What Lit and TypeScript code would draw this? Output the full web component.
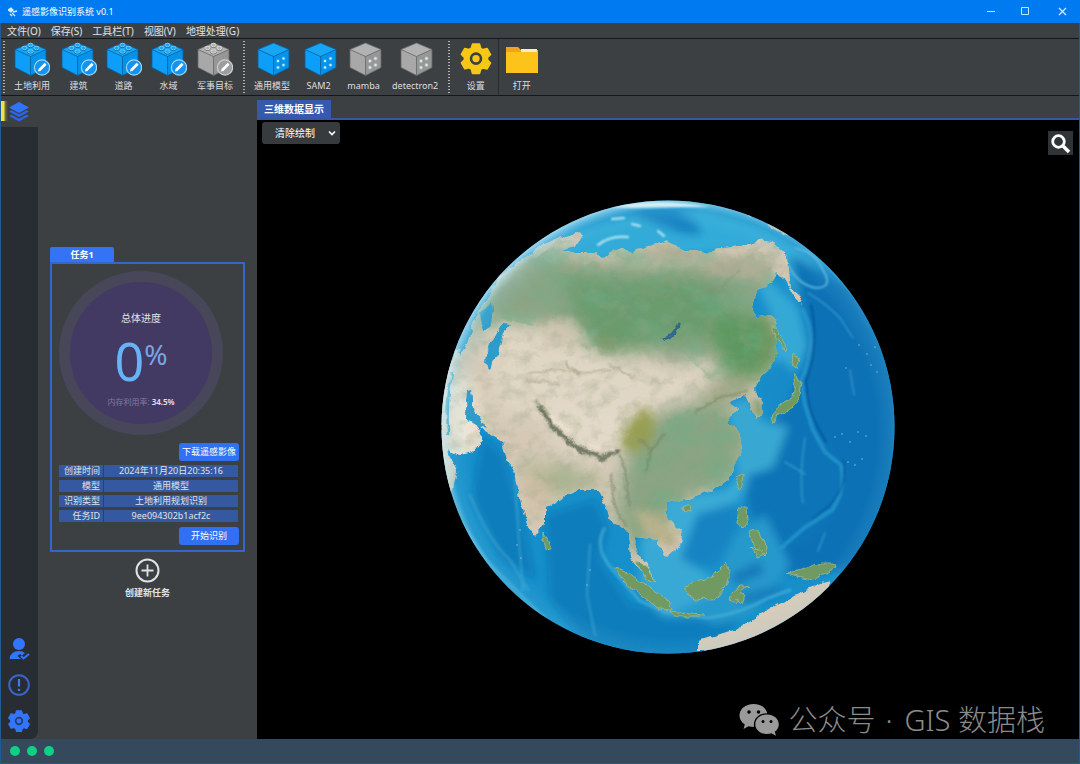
import { LitElement, html, css, svg } from "lit";
import { customElement, property } from "lit/decorators.js";

const gearPath =
  "M9.300 1.800h5.400l.9 3.200 1.700 1 3.300-.8 2.600 4.600-2.300 2.300v1.900l2.300 2.300-2.600 4.600-3.300-.8-1.700 1-.9 3.200H9.300L8.400 21l-1.700-1-3.300.8-2.600-4.600 2.300-2.300V12L.8 9.700l2.600-4.600 3.300.8 1.700-1z";

const cube = (kind: string, on: boolean) => {
  const top = on ? "#16a6f4" : "#b2b2b2";
  const left = on ? "#0c9ef8" : "#a8a8a8";
  const right = on ? "#0792ea" : "#979797";
  const edge = on ? "#0a5e9c" : "#666";
  const stud = on ? "#6fcdfb" : "#dcdcdc";
  const brick = kind === "brick";
  const dx = brick ? 0 : 3;
  return html`<svg width="36" height="36" viewBox="0 0 36 36" aria-hidden="true">
    <g transform="translate(${dx} 0)">
      <path d="M16.500 2 32 8.500v18L16.500 34.500 1 26.500v-18z" fill=${left} />
      <path d="M16.500 2 32 8.500 16.500 15.500 1 8.500z" fill=${top} />
      <path d="M16.500 15.500 32 8.500v18L16.500 34.500z" fill=${right} />
      <path
        d="M1 8.500 16.500 15.500 32 8.500M16.500 15.500v19M16.500 2 32 8.500v18L16.500 34.500 1 26.500v-18z"
        fill="none" stroke=${edge} stroke-width="0.8" stroke-linejoin="round" />
      ${brick
        ? svg`${[[16.5, 4], [10.5, 7], [22.5, 7], [16.5, 10.5]].map(
            ([x, y]) => svg`<ellipse cx=${x} cy=${y + 0.8} rx="3" ry="2" fill=${edge} />
            <ellipse cx=${x} cy=${y} rx="2.600" ry="1.700" fill=${top} stroke=${stud} stroke-width="1" />`
          )}`
        : svg`${[[21, 20], [26.5, 17.5], [21, 26.5], [26.5, 24]].map(
            ([x, y]) => svg`<circle cx=${x} cy=${y} r="2" fill=${top} /><circle cx=${x} cy=${y} r="1.200" fill="#d6e9f4" />`
          )}`}
    </g>
    ${brick
      ? svg`<circle cx="28" cy="26.500" r="7.600" fill=${on ? "#1693f0" : "#9d9d9d"} stroke=${on ? "#9ad6f8" : "#cfcfcf"} stroke-width="1.200" />
        <path d="M24 30.500l.5-2.500 6.200-6.200 1.900 1.900-6.200 6.200z" fill="#fff" />`
      : null}
  </svg>`;
};

@customElement("tool-button")
class ToolButton extends LitElement {
  @property() label = "";
  @property() icon = "brick";
  @property({ type: Boolean }) on = false;

  static styles = css`
    :host { display: block; }
    .tool {
      display: flex; flex-direction: column; align-items: center;
      min-width: 45px; height: 56px; padding: 2px 0 0; border: 0;
      background: none; color: #dcdfe1;
      font: 9px/14px "Noto Sans", "Noto Sans CJK SC", sans-serif;
      white-space: nowrap;
    }
    .tool svg { display: block; margin-bottom: 2px; }
    .tool span { padding: 0 6px; }
  `;

  render() {
    const picture =
      this.icon === "gear"
        ? html`<svg width="36" height="36" viewBox="0 0 36 36" aria-hidden="true">
            <g transform="translate(2.400 .8) scale(1.300)"><path d=${gearPath} fill="#f5c816" stroke="#f5c816" stroke-width="1.200" stroke-linejoin="round" /></g>
            <circle cx="18" cy="17.600" r="5" fill="#f5c816" stroke="#3c4043" stroke-width="2.600" />
          </svg>`
        : this.icon === "folder"
          ? html`<svg width="36" height="36" viewBox="0 0 36 36" aria-hidden="true">
              <path d="M2 6h12l3 3h17v23H2z" fill="#f0a41c" />
              <path d="M17 8h16v3H17z" fill="#f7ecc8" />
              <path d="M2 11h32v21H2z" fill="#fcc41b" />
            </svg>`
          : cube(this.icon, this.on);
    return html`<button class="tool" type="button">${picture}<span>${this.label}</span></button>`;
  }
}

@customElement("earth-globe")
class EarthGlobe extends LitElement {
  static styles = css`
    :host { display: block; }
    svg { display: block; }
  `;

  render() {
    return html`<svg width="454" height="454" viewBox="441 200 454 454" role="img" aria-label="地球">
      <defs>
        <clipPath id="disc"><circle cx="668" cy="427" r="226.500" /></clipPath>
        <filter id="b1" x="-20%" y="-20%" width="140%" height="140%"><feGaussianBlur stdDeviation="1.200" /></filter>
        <filter id="b4" x="-40%" y="-40%" width="180%" height="180%"><feGaussianBlur stdDeviation="4" /></filter>
        <filter id="b10" x="-60%" y="-60%" width="220%" height="220%"><feGaussianBlur stdDeviation="9" /></filter>
        <filter id="rough" x="-5%" y="-5%" width="110%" height="110%">
          <feTurbulence type="fractalNoise" baseFrequency="0.120" numOctaves="3" seed="4" result="n" />
          <feDisplacementMap in="SourceGraphic" in2="n" scale="6" xChannelSelector="R" yChannelSelector="G" />
        </filter>
        <filter id="grain" x="0" y="0" width="100%" height="100%">
          <feTurbulence type="fractalNoise" baseFrequency="0.060 0.080" numOctaves="5" seed="9" />
          <feColorMatrix values="0 0 0 0 .30  0 0 0 0 .36  0 0 0 0 .22  2.200 0 0 0 -1" />
        </filter>
        <filter id="green" x="0" y="0" width="100%" height="100%">
          <feTurbulence type="fractalNoise" baseFrequency="0.030 0.045" numOctaves="5" seed="21" result="n" />
          <feColorMatrix in="n" values="0 0 0 0 .16  0 0 0 0 .42  0 0 0 0 .24  0 3.500 0 0 -1.500" result="c" />
          <feComposite in="c" in2="SourceGraphic" operator="in" />
        </filter>
        <radialGradient id="rim" gradientUnits="userSpaceOnUse" cx="674" cy="433" r="235">
          <stop offset="0.860" stop-color="#6fd0ee" stop-opacity="0" />
          <stop offset="0.950" stop-color="#7fd5f0" stop-opacity="0.150" />
          <stop offset="1" stop-color="#d8f3fa" stop-opacity="0.750" />
        </radialGradient>
        <clipPath id="land">
          <path d="M441 200V380L500 275 520 261 543 245 562 237 580 232 582 235 575 247 563 250 570 253 597 253 603 258 610 252 623 248 633 255 637 249 650 246 663 242 667 240 677 245 680 250 697 250 707 255 715 248 740 245 750 245 757 240 773 242 787 255 788 270 790 287 799 295 803 306 793 296 785 280 777 272 773 282 757 290 753 307 757 317 772 315 777 323 777 353 770 368 760 377 755 390 762 403 763 413 757 420 752 410 745 395 737 398 728 403 738 408 728 420 730 425 738 430 742 447 738 460 728 480 713 490 697 495 690 500 680 500 667 503 667 517 680 530 683 543 667 557 660 548 657 540 637 537 635 553 647 563 653 577 643 573 630 557 628 533 623 527 610 522 607 507 598 490 580 490 567 495 545 508 545 523 535 536 530 530 522 507 517 487 513 470 507 460 502 442 483 430 472 421 468 390 466 400 468 420 475 420 482 440 473 452 460 455 448 450 449 456 457 470 453 490 441 500V200z" />
        </clipPath>
      </defs>
      <g clip-path="url(#disc)">
        <rect x="441" y="200" width="454" height="454" fill="#178fca" />
        <g filter="url(#b4)">
          <path d="M480 330C520 220 620 215 700 210 780 225 810 255 850 300L800 300 770 250 600 262 520 265z" fill="#31abd8" />
          <path d="M625 208l50 3 20 10 8 14-20-1-45-17z" fill="#1582c2" />
          <path d="M790 255l25 12 35 20 48 80V520L850 570 785 575 760 480 780 440 802 400 808 330z" fill="#0f72b5" />
          <path d="M805 365q0 50 22 75l15 30-5 40-24 28-45 20-20-50-5-50 35-40z" fill="#1075b7" />
          <path d="M483 435l20 20 18 60 15 65-35-20-30-60zM545 515l50-15 13 30-8 30 30 45 60 10 50 0-30 50-110-5-50-60z" fill="#087dbb" />
          <path d="M690 505l45-10 2 35-20 32-32 10-5-22z" fill="#1484c2" />
          <path d="M755 283l18 0 25 25 10 40-15 25-20-10-2-50z" fill="#36a9d6" />
          <path d="M728 405l20-8 15 25 25 5-15 40-35 12-8-50z" fill="#38a8d2" />
          <path d="M665 498l60-8 18-18 6 10-12 20-40 12-15 40-12 20-22-5-8-30 20-10z" fill="#3aabd6" />
          <path d="M760 380l20-22 15 15-5 30-20 18z" fill="#188bc8" />
          <path d="M640 545l35 10 35 20 20 25-20 15-50 0-20-30z" fill="#38a9d5" />
          <path d="M735 535l30-20 25 50-40 50-70 20-20-15 50-25z" fill="#2599cc" />
          <path d="M730 575l30-14 4 12-28 12zM740 595l40-10 2 8-38 12z" fill="#1279ba" />
          <path d="M640 618l60 0 20 8-30 25-50-3z" fill="#0f7dbd" />
        </g>
        <g fill="none" filter="url(#b1)" stroke-linecap="round" stroke-linejoin="round">
          <path d="M788 265q10 20 28 23 18 0 7-18-8-18-28-22" stroke="#56b4df" stroke-width="2" />
          <path d="M808 293q20 12 32 25l13 20" stroke="#3f9fd2" stroke-width="1.200" />
          <path d="M803 310q10 20 7 40-3 20-9 30l4 25 8 25 12 22 16 13q5 25-9 45l-28 18-23 20" stroke="#2a9bd0" stroke-width="4" opacity="0.700" />
          <path d="M811 305q9 38-5 76 1 24 10 43l10 18" stroke="#075a9c" stroke-width="2" />
          <path d="M843 460q5 25-12 44l-18 15" stroke="#075b9e" stroke-width="1.600" />
          <path d="M470 495q18 45 40 65l18 30M590 545l-3 50 8 40M515 480q3 55 8 110" stroke="#4db4dd" stroke-width="3" opacity="0.350" />
          <path d="M604 529q-11 20 10 42l26 30 28 12 40 5q35-5 60-20l22-8M446 500l40 60 60 60" stroke="#47b2db" stroke-width="3.500" opacity="0.600" />
          <path d="M805 438q-6 40-2 65M825 533l-7 18M850 370l4 25M785 462l20 12" stroke="#4cabd8" stroke-width="1.500" opacity="0.600" />
          <path d="M598 245q12-10 30-8M612 219l12-1M632 224l8 2M658 231l6 5" stroke="#c9eef7" stroke-width="2" />
        </g>
        <g fill="#cdeefa" opacity="0.350">
          ${[[835, 437], [842, 434], [850, 442], [858, 432], [866, 436], [848, 462], [855, 465], [862, 459], [859, 345], [867, 354], [875, 347], [871, 365], [877, 372], [846, 368], [520, 530], [517, 545], [521, 558], [590, 570], [587, 585]].map(
            ([x, y]) => svg`<circle cx=${x} cy=${y} r="1" />`
          )}
        </g>
        <g filter="url(#rough)">
          <g clip-path="url(#land)">
            <rect x="441" y="200" width="400" height="400" fill="#d5c9b6" />
            <g filter="url(#b10)">
              <path d="M480 300l50-45 75 8 100 0 60 0 10 30-20 60-30 20-50-10-50-18-40 14-25-5-25-15-70-4z" fill="#8ba685" />
              <path d="M560 275l60 5 60-5 50 15 10 30-30 20-50 0-40 20-35-20z" fill="#6b9c6e" />
              <path d="M710 320l60-8 15 35-25 35-40-10z" fill="#5d985f" />
              <path d="M480 325l60 0 60 25 60 20 50-12 15 25-35 35-70 0-60 5-60-12z" fill="#e0d6c4" />
              <path d="M540 405l50-8 50 15 10 10-15 25-40 15-40-20z" fill="#e3d9c8" />
              <path d="M515 464l50 3 40 12-25 12-40 5z" fill="#a3b18c" />
              <path d="M630 430l40-25 50-5 30 30-10 50-55 20-50 60-20-45z" fill="#8aa583" />
              <path d="M690 395l30-18 30 0 5 15-30 12z" fill="#a3a888" />
              <path d="M441 370l30 10 15 60-45 50z" fill="#f0e6d7" />
              <path d="M520 475l30 0-5 30-10 20z" fill="#d0bea5" />
            </g>
            <path d="M500 280l60-40 220 0 5 60-10 65-20 30-45-15-30-30-50-8-45 6-20-18-65-10zM640 430l60-25 45 25-10 50-55 22-45 15z" filter="url(#green)" opacity="0.450" />
            <g filter="url(#b4)">
              <path d="M635 415l13-8 7 18-6 20-20 8-10-12z" fill="#969c4e" opacity="0.900" />
              <path d="M600 333l18 8-8 10-14-3zM765 320l10 10-3 30-14 12zM752 400l12 4 0 12-8 4z" fill="#719661" />
              <path d="M700 262l30-6 40 6-8 22-30-6-25-4zM640 250l30-6 35 10-8 6-50-2z" fill="#b3ae96" opacity="0.850" />
              <path d="M632 510l25 3 20 20-3 16-25-12z" fill="#b8b28c" />
              <path d="M545 350l-5-28 30-4 20 25z" fill="#d4c8b3" opacity="0.800" />
            </g>
            <g fill="none" stroke-linejoin="round" stroke-linecap="round" filter="url(#b1)">
              <path d="M540 407l8 13 16 18 18 12 20 8 16-7" stroke="#6d735e" stroke-width="4.500" />
              <path d="M545 407l10 13 18 15 18 11 22 5" stroke="#ede2cf" stroke-width="3" />
              <path d="M530 372l30-2 26 3 24-3M565 363l15 12M610 365l24 12M525 380l35 4" stroke="#8b8768" stroke-width="1.200" opacity="0.800" />
              <path d="M620 455l6 20 2 30M640 440l12 10-6 20M612 475l2 30 12 20M535 401l15 13M650 452l15-18M695 412l25-15 25-5" stroke="#6e815e" stroke-width="2" opacity="0.700" />
              <path d="M740 270l-20 18-36 10M613 275l17 22-5 20" stroke="#779275" stroke-width="1.500" opacity="0.600" />
            </g>
            <rect x="441" y="200" width="400" height="400" filter="url(#grain)" opacity="0.420" />
          </g>
          <g fill="#2e9cca">
            <path d="M511 325l-8 9-5 19-8 16-6-5 1-9 11-22 7-9zM480 313l12-11 1 10-3 16-7 4zM460 355l-1-8 10-22 3 5-5 16z" />
            <path d="M467 390l4-1 2 20 6 8 8 12-9-3-12-7z" />
          </g>
          <path d="M452 372q-6 30-4 62" fill="none" stroke="#49a9c8" stroke-width="2.500" />
          <path d="M661 339q13-3 17-17l2 1q-1 11-15 18z" fill="#2f6790" />
          <g fill="#6f9a62" stroke="#a9b78a" stroke-width="0.800">
            <path d="M543 533l6 8 3 8-7 1-2-8z" />
            <path d="M615 568l14 5 20 15 20 13 3 9-13-1-18-14-18-14zM636 562l11 5 8 15-8-3z" />
            <path d="M684 588l14-9 14-2 14-14 4 8-4 16-12 13-20-1z" />
            <path d="M738 475l5-1-1 12-4 3-2-7zM682 508l8-3 1 6-7 2zM739 507l8 0 1 13-5 8-6-5zM748 530l11 1 8 15-2 10-6-3-5-8zM750 547l10 3 5 5-8 3z" />
            <path d="M732 593l8-7 9 0-10 5 6 5-3 7-5-3-2 4-5-4zM670 611l32 3 3 2-31 0z" />
            <path d="M787 573l14-3 20-7 15 0 1 4-23 12-17-3z" />
            <path d="M793 354l7 5-3 8-5-4zM796 373l5 10-3 17-9 11-12 4-3 8-2-7 8-11 13-8zM773 325l8 12 6 12-2 1-12-19z" />
          </g>
          <path d="M698 651l0-10 38-12 40-24 34-16 18-8 3 8-42 44-50 18z" fill="#d8cbb9" />
          <path d="M750 213l30 10 20 16-20-6-17-13-15-4z" fill="#b7bda8" />
        </g>
        <path d="M610 207q50-10 100 0l-28 0-50 1z" fill="#f1f8f7" filter="url(#b1)" />
        <circle cx="668" cy="427" r="227" fill="url(#rim)" />
      </g>
    </svg>`;
  }
}

@customElement("app-root")
class AppRoot extends LitElement {
  static styles = css`
    :host {
      display: block;
      font: 9px/14px "Noto Sans", "Noto Sans CJK SC", sans-serif;
      color: #e0e3e5;
    }
    * { box-sizing: border-box; }
    button, select { font: inherit; color: inherit; }
    svg { display: block; }
    .window {
      display: flex; flex-direction: column; min-height: 100vh;
      background: #3c4043; border: solid #1f5c96; border-width: 0 1px 1px;
    }
    .title {
      display: flex; align-items: center; gap: 4px; height: 23px;
      margin: 0 -1px; padding: 0 0 0 8px; background: #007af0; color: #fff;
    }
    .name { flex: 1; margin: 0; font: inherit; }
    .win { display: grid; place-items: center; width: 30px; height: 23px; padding: 0; border: 0; background: none; }
    .title .win:last-child { width: 36px; }
    .menu { display: flex; height: 16px; padding: 0 6px; gap: 10px; border-bottom: 1px solid #15181a; }
    .menu button { border: 0; padding: 1px 0 0; background: none; font-size: 10px; line-height: 14px; }
    .tools { display: flex; height: 57px; border-bottom: 1px solid #15181a; }
    .group { display: flex; padding: 0 1px 0 3px; }
    .group::before {
      content: ""; width: 2px; margin: 2px 3px 2px 0;
      background: repeating-linear-gradient(#b0b4b6 0 1px, transparent 1px 3px);
    }
    .group:first-child { padding-left: 2px; }
    .divided { border-left: 1px solid #2a2d30; }
    .main { flex: 1; display: flex; background: #3c4043; }
    .rail { display: flex; flex-direction: column; width: 37px; }
    .rail button { display: grid; place-items: center; width: 36px; height: 36px; padding: 0; border: 0; background: none; }
    .rail .layers {
      height: 31px; background: linear-gradient(90deg, #f0e04a 3px, #77733f 4px, transparent 7px) 0 5px / 100% 20px no-repeat;
    }
    .dark { flex: 1; display: flex; flex-direction: column; justify-content: flex-end; background: #282c33; border-radius: 0 0 8px 0; }
    .tasks { display: flex; flex-direction: column; justify-content: center; width: 219px; padding: 12px 12px 0 12px; }
    .task-tab {
      align-self: flex-start; width: 64px; height: 15px; border: 0; padding: 0; border-radius: 2px 2px 0 0;
      background: #3573f5; color: #fff; font-weight: 700; line-height: 15px;
    }
    .card { border: 2px solid #3467c8; padding: 7px 4px 5px 6px; display: flex; flex-direction: column; }
    .dial {
      display: flex; flex-direction: column; align-items: center; width: 164px; height: 164px; margin-left: 1px;
      padding-top: 29px; border: 11px solid #484659; border-radius: 50%; background: #433a64;
    }
    .dial .caption { font-size: 10px; }
    .percent { display: flex; align-items: flex-start; height: 66px; color: #66b3f8; font-size: 52px; line-height: 64px; margin-top: 4px; }
    .percent sup { font-size: 28px; line-height: 50px; color: #79a5e2; }
    .memory { font-size: 8px; color: #85799f; }
    .memory b { color: #e6e3f0; font-weight: 600; }
    .action {
      align-self: flex-end; width: 60px; height: 18px; margin-top: 8px; padding: 0; border: 0; border-radius: 3px;
      background: #3070f2; color: #fff; white-space: nowrap;
    }
    .facts { width: 100%; margin-top: 1px; border-spacing: 1px 3px; }
    .facts th, .facts td { height: 12px; padding: 0; background: #3459a0; font-weight: 400; line-height: 12px; }
    .facts th { width: 44px; padding-right: 3px; text-align: right; }
    .facts td { text-align: center; }
    .action.start { margin-top: 2px; }
    .create {
      display: flex; flex-direction: column; align-items: center; gap: 3px; align-self: center;
      margin-top: 6px; padding: 0; border: 0; background: none; font-weight: 700;
    }
    .view { flex: 1; display: flex; flex-direction: column; min-width: 0; }
    .tabs { display: flex; height: 24px; padding-top: 4px; border-bottom: 2px solid #3556a0; }
    .tabs button { border: 0; padding: 0 7px; background: #3759ad; color: #fff; font-size: 10px; font-weight: 700; }
    .scene { position: relative; flex: 1; display: grid; place-items: center; padding-bottom: 5px; background: #000; }
    .clear { position: absolute; left: 5px; top: 2px; }
    .clear select {
      appearance: none; width: 78px; height: 22px; border: 0; border-radius: 3px; padding: 0 0 0 13px;
      background: #373b3e; color: #fff; font-size: 10px;
    }
    .clear svg { position: absolute; right: 4px; top: 8px; pointer-events: none; }
    .search {
      position: absolute; right: 6px; top: 11px; display: grid; place-items: center;
      width: 25px; height: 24px; padding: 0; border: 0; background: #303436;
    }
    .mark {
      position: absolute; right: 34px; bottom: 0; display: flex; align-items: center; gap: 10px;
      color: #8b8b8b; font: 300 29px/38px "Noto Sans", "Noto Sans CJK SC", sans-serif; white-space: nowrap;
    }
    .mark i { padding: 0 12px 0 10px; font-style: normal; }
    .status { display: flex; align-items: center; gap: 7px; height: 24px; padding: 0 9px; background: #34495c; }
    .dot { width: 10px; height: 10px; border-radius: 50%; background: #10d085; }
  `;

  private first = ["土地利用", "建筑", "道路", "水域", "军事目标"];
  private models = ["通用模型", "SAM2", "mamba", "detectron2"];
  private facts = [
    ["创建时间", "2024年11月20日20:35:16"],
    ["模型", "通用模型"],
    ["识别类型", "土地利用规划识别"],
    ["任务ID", "9ee094302b1acf2c"],
  ];

  render() {
    return html`<div class="window">
      <header class="title">
        <svg width="10" height="10" viewBox="0 0 10 10" aria-hidden="true">
          <path d="M0 3l3-2 2 2-2 2zM5 5l4-1M4 6l3 3M2 7l2 2" fill="#d9ecff" stroke="#d9ecff" stroke-width="1.300" />
        </svg>
        <h1 class="name">遥感影像识别系统 v0.1</h1>
        <button class="win" aria-label="最小化"><svg width="9" height="9" viewBox="0 0 9 9"><path d="M0 4.500h8" stroke="#b9ecff" /></svg></button>
        <button class="win" aria-label="最大化"><svg width="9" height="9" viewBox="0 0 9 9"><path d="M.5 .5h7v7h-7z" fill="none" stroke="#b9ecff" /></svg></button>
        <button class="win" aria-label="关闭"><svg width="9" height="9" viewBox="0 0 9 9"><path d="M1 1l7 7M8 1L1 8" stroke="#c9f2ff" stroke-width="1.200" /></svg></button>
      </header>
      <nav class="menu">
        ${["文件(O)", "保存(S)", "工具栏(T)", "视图(V)", "地理处理(G)"].map((m) => html`<button type="button">${m}</button>`)}
      </nav>
      <div class="tools">
        <div class="group">${this.first.map((t, i) => html`<tool-button label=${t} icon="brick" ?on=${i < 4}></tool-button>`)}</div>
        <div class="group">${this.models.map((t, i) => html`<tool-button label=${t} icon="cube" ?on=${i < 2}></tool-button>`)}</div>
        <div class="group">
          <tool-button label="设置" icon="gear"></tool-button>
          <tool-button class="divided" label="打开" icon="folder"></tool-button>
        </div>
      </div>
      <div class="main">
        <nav class="rail">
          <button class="layers" aria-label="图层">
            <svg width="22" height="22" viewBox="0 0 22 22">
              <path d="M11 1l10 5.500-10 5.500L1 6.500z" fill="#2f74ff" />
              <path d="M1 10.500l2.500-1.300L11 13.300l7.500-4.100 2.500 1.300-10 5.500zM1 15l2.500-1.300 7.500 4.100 7.500-4.100L21 15l-10 5.500z" fill="#2b66e8" />
            </svg>
          </button>
          <div class="dark">
            <button aria-label="用户">
              <svg width="22" height="24" viewBox="0 0 22 24">
                <circle cx="11" cy="7" r="6" fill="#3276ff" />
                <path d="M1.500 22q1-8 9.500-8 4 0 6 2l-3 2.500-2-1.500-2.500 2 3.500 3z" fill="#3276ff" />
                <path d="M13 19l2.500 2.500L21 17" fill="none" stroke="#3276ff" stroke-width="2" />
              </svg>
            </button>
            <button aria-label="提示">
              <svg width="24" height="24" viewBox="0 0 24 24">
                <circle cx="12" cy="12" r="9.800" fill="none" stroke="#3766c6" stroke-width="2" />
                <path d="M12 6v7.500M12 15.800v2.200" stroke="#3f7ae8" stroke-width="2.200" />
              </svg>
            </button>
            <button aria-label="设置">
              <svg width="24" height="24" viewBox="0 0 26 26">
                <g transform="translate(1 .1)"><path d=${gearPath} fill="#3276ff" stroke="#3276ff" stroke-width="1.200" stroke-linejoin="round" /></g>
                <circle cx="13" cy="13" r="3.600" fill="#3276ff" stroke="#263a6b" stroke-width="1.800" />
              </svg>
            </button>
          </div>
        </nav>
        <section class="tasks">
          <button class="task-tab" type="button">任务1</button>
          <div class="card">
            <div class="dial">
              <span class="caption">总体进度</span>
              <div class="percent"><span>0</span><sup>%</sup></div>
              <span class="memory">内存利用率: <b>34.5%</b></span>
            </div>
            <button class="action" type="button">下载遥感影像</button>
            <table class="facts">
              ${this.facts.map(([k, v]) => html`<tr><th scope="row">${k}</th><td>${v}</td></tr>`)}
            </table>
            <button class="action start" type="button">开始识别</button>
          </div>
          <button class="create" type="button">
            <svg width="25" height="25" viewBox="0 0 25 25" aria-hidden="true">
              <circle cx="12.500" cy="12.500" r="11" fill="none" stroke="#dfe1e2" stroke-width="2" />
              <path d="M12.500 6.500v12M6.500 12.500h12" stroke="#dfe1e2" stroke-width="1.800" />
            </svg>
            创建新任务
          </button>
        </section>
        <section class="view">
          <div class="tabs"><button type="button">三维数据显示</button></div>
          <div class="scene">
            <earth-globe></earth-globe>
            <div class="clear">
              <select aria-label="清除绘制"><option>清除绘制</option></select>
              <svg width="8" height="7" viewBox="0 0 8 7" aria-hidden="true"><path d="M1 1.500l3 3 3-3" fill="none" stroke="#fff" stroke-width="1.600" /></svg>
            </div>
            <button class="search" aria-label="搜索">
              <svg width="21" height="21" viewBox="0 0 21 21">
                <circle cx="8.500" cy="8.500" r="5.800" fill="none" stroke="#fff" stroke-width="2.800" />
                <path d="M12.500 12.500l6.500 6.500" stroke="#fff" stroke-width="3.600" />
              </svg>
            </button>
            <div class="mark">
              <svg width="40" height="34" viewBox="0 0 40 34" aria-hidden="true">
                <path d="M14.500 1C6.500 1 .5 6 .5 12.500c0 3.700 2 6.800 5.300 9L4.500 26l5-2.700q2.500.8 5.500.8C14 15 20 10 28.300 10.200 27 4.500 21.500 1 14.500 1z" fill="#9a9a9a" />
                <path d="M28 11.500c-6.700 0-11.700 4.300-11.700 9.700S21.300 31 28 31q2.300 0 4.500-.7l4.500 2.500-1.200-4c2.600-1.800 4-4.500 4-7.600 0-5.400-5.200-9.700-11.800-9.700z" fill="#9a9a9a" />
                <g fill="#000"><circle cx="10" cy="9" r="1.800" /><circle cx="19.500" cy="9" r="1.800" /><circle cx="24" cy="18.500" r="1.500" /><circle cx="32" cy="18.500" r="1.500" /></g>
              </svg>
              <span>公众号<i>·</i>GIS 数据栈</span>
            </div>
          </div>
        </section>
      </div>
      <footer class="status"><span class="dot"></span><span class="dot"></span><span class="dot"></span></footer>
    </div>`;
  }
}
